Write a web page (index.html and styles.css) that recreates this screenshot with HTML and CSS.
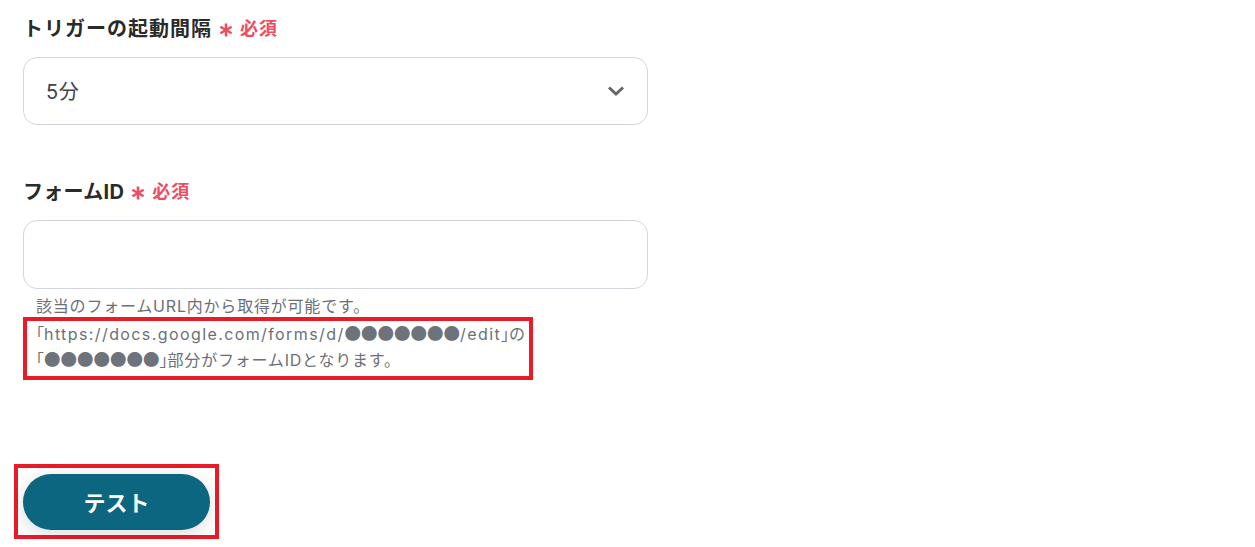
FILE: index.html
```html
<!DOCTYPE html>
<html lang="ja">
<head>
<meta charset="utf-8">
<link rel="stylesheet" href="styles.css">
</head>
<body>
<main class="form">
  <section class="field field-first">
    <div class="label"><span class="label-text">トリガーの起動間隔</span><span class="req"><svg class="ast" width="14" height="14" viewBox="0 0 14 14"><g stroke="#ee4d5f" stroke-width="2.6" stroke-linecap="butt"><line x1="7" y1="0.5" x2="7" y2="13.5"/><line x1="1.4" y1="3.75" x2="12.6" y2="10.25"/><line x1="1.4" y1="10.25" x2="12.6" y2="3.75"/></g></svg>必須</span></div>
    <div class="select">
      <span class="value">5分</span>
      <svg class="chev" width="18" height="12" viewBox="0 0 18 12"><path d="M2 2.5 L9 9 L16 2.5" fill="none" stroke="#666" stroke-width="3"/></svg>
    </div>
  </section>
  <section class="field">
    <div class="label"><span class="label-text label-tight">フォームID</span><span class="req"><svg class="ast" width="14" height="14" viewBox="0 0 14 14"><g stroke="#ee4d5f" stroke-width="2.6" stroke-linecap="butt"><line x1="7" y1="0.5" x2="7" y2="13.5"/><line x1="1.4" y1="3.75" x2="12.6" y2="10.25"/><line x1="1.4" y1="10.25" x2="12.6" y2="3.75"/></g></svg>必須</span></div>
    <div class="input"></div>
    <div class="help">
      <div class="help-line">該当のフォームURL内から取得が可能です。</div>
      <div class="mark">
        <div class="help-line"><span class="br">「</span><span class="lat">https://docs.google.com/forms/d/</span><span class="dots">●●●●●●●</span><span class="lat">/edit</span><span class="br">」</span>の</div>
        <div class="help-line"><span class="br">「</span><span class="dots">●●●●●●●</span><span class="br">」</span>部分がフォームIDとなります。</div>
      </div>
    </div>
  </section>
  <div class="btn-mark">
    <button class="btn">テスト</button>
  </div>
</main>
</body>
</html>
```
FILE: styles.css
```css
html, body {
  margin: 0;
  padding: 0;
  background: #ffffff;
}
body {
  font-family: "Inter", "Noto Sans CJK JP", sans-serif;
  color: #2b2b2b;
}
.form {
  padding: 15px 0 0 23px;
  width: 625px;
}
.field-first {
  margin-bottom: 53px;
}
.label {
  font-size: 20px;
  font-weight: 700;
  line-height: 28px;
  height: 28px;
  color: #2a2a2a;
  display: flex;
  align-items: center;
}
.label-text {
  letter-spacing: 1px;
}
.label-tight {
  letter-spacing: 0.3px;
}
.req {
  color: #ee4d5f;
  font-size: 18px;
  font-weight: 700;
  margin-left: 7px;
  letter-spacing: 1px;
  display: flex;
  align-items: center;
}
.ast {
  display: block;
  margin-right: 7px;
  margin-top: 2px;
}
.select, .input {
  margin-top: 14px;
  height: 68px;
  box-sizing: border-box;
  border: 1px solid #d3d6dc;
  border-radius: 14px;
  background: #fff;
}
.input {
  height: 69px;
}
.select {
  display: flex;
  align-items: center;
  justify-content: space-between;
  padding: 0 22px 2px 22px;
}
.value {
  font-size: 20px;
  color: #3d4350;
  letter-spacing: 0.5px;
}
.chev {
  display: block;
  margin-top: 2px;
}
.help {
  margin-top: 4px;
  padding-left: 13px;
  font-size: 16px;
  line-height: 26px;
  color: #6b7078;
  letter-spacing: 0.05em;
}
.help-line {
  height: 26px;
}
.br {
  font-feature-settings: "halt";
  letter-spacing: 0;
}
.lat {
  letter-spacing: 1.4px;
}
.dots {
  font-family: "Noto Sans CJK JP", sans-serif;
  font-size: 16.5px;
  line-height: 16px;
  letter-spacing: 0px;
  color: #6e737b;
}
.mark {
  margin-left: -13px;
  margin-top: -2px;
  padding: 0 3px 3px 9px;
  border: 4px solid #e81c27;
  width: fit-content;
}
.btn-mark {
  margin-top: 84px;
  margin-left: -9px;
  width: fit-content;
  border: 4px solid #e81c27;
  padding: 6px 5px 5px 5px;
}
.btn {
  display: block;
  width: 187px;
  height: 56px;
  border: none;
  border-radius: 28px;
  background: #0d6680;
  color: #fff;
  font-family: "Noto Sans CJK JP", sans-serif;
  font-size: 22px;
  font-weight: 700;
  padding: 0 0 3px 0;
  box-shadow: 0 4px 18px rgba(0, 0, 0, 0.14);
}
```
